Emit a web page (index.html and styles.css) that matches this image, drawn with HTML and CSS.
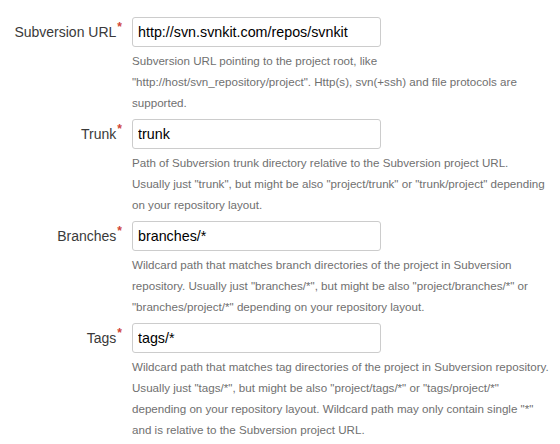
FILE: index.html
```html
<!DOCTYPE html>
<html>
<head>
<meta charset="utf-8">
<link rel="stylesheet" href="styles.css">
</head>
<body>
<form class="form">
  <div class="row">
    <label class="label">Subversion URL<span class="req">*</span></label>
    <div class="field">
      <input class="text" type="text" value="http://svn.svnkit.com/repos/svnkit">
      <div class="desc">Subversion URL pointing to the project root, like<br>"http://host/svn_repository/project". Http(s), svn(+ssh) and file protocols are<br>supported.</div>
    </div>
  </div>
  <div class="row">
    <label class="label">Trunk<span class="req">*</span></label>
    <div class="field">
      <input class="text" type="text" value="trunk">
      <div class="desc">Path of Subversion trunk directory relative to the Subversion project URL.<br>Usually just "trunk", but might be also "project/trunk" or "trunk/project" depending<br>on your repository layout.</div>
    </div>
  </div>
  <div class="row">
    <label class="label">Branches<span class="req">*</span></label>
    <div class="field">
      <input class="text" type="text" value="branches/*">
      <div class="desc">Wildcard path that matches branch directories of the project in Subversion<br>repository. Usually just "branches/*", but might be also "project/branches/*" or<br>"branches/project/*" depending on your repository layout.</div>
    </div>
  </div>
  <div class="row">
    <label class="label">Tags<span class="req">*</span></label>
    <div class="field">
      <input class="text" type="text" value="tags/*">
      <div class="desc">Wildcard path that matches tag directories of the project in Subversion repository.<br>Usually just "tags/*", but might be also "project/tags/*" or "tags/project/*"<br>depending on your repository layout. Wildcard path may only contain single "*"<br>and is relative to the Subversion project URL.</div>
    </div>
  </div>
</form>
</body>
</html>
```
FILE: styles.css
```css
html, body {
  margin: 0;
  padding: 0;
  background: #ffffff;
}
body {
  font-family: "Liberation Sans", Arial, sans-serif;
  color: #333333;
}
.form {
  padding-top: 17px;
  display: flex;
  flex-direction: column;
  gap: 6px;
}
.row {
  display: grid;
  grid-template-columns: 122px 1fr;
  column-gap: 10px;
  align-items: start;
}
.label {
  text-align: right;
  font-size: 14px;
  line-height: 31px;
  color: #3a3a3a;
  white-space: nowrap;
}
.req {
  color: #d04437;
  font-size: 12px;
  font-weight: bold;
  position: relative;
  top: -6px;
  margin-left: 1px;
}
.field {
  display: flex;
  flex-direction: column;
}
.text {
  box-sizing: border-box;
  width: 249px;
  height: 30px;
  margin: 0;
  padding: 0 5px;
  border: 1px solid #cccccc;
  border-radius: 3px;
  font-family: "Liberation Sans", Arial, sans-serif;
  font-size: 14.3px;
  color: #000000;
  background: #ffffff;
  outline: none;
}
.desc {
  margin-top: 3px;
  font-size: 11.6px;
  line-height: 21px;
  color: #707070;
  white-space: nowrap;
}
```
